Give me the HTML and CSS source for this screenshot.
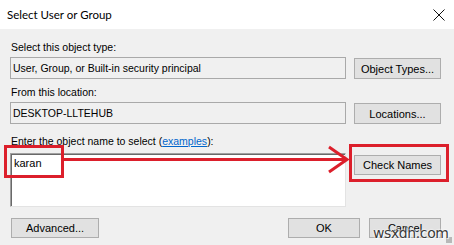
FILE: index.html
```html
<!DOCTYPE html>
<html>
<head>
<meta charset="utf-8">
<link rel="stylesheet" href="styles.css">
</head>
<body>
<div class="dialog">
  <div class="titlebar">
    <span class="title">Select User or Group</span>
    <svg class="close" width="12" height="12" viewBox="0 0 12 12"><path d="M0.5 0.5 L11.5 11.5 M11.5 0.5 L0.5 11.5" stroke="#111" stroke-width="1" fill="none"/></svg>
  </div>
  <div class="content">
    <div class="label l1">Select this object type:</div>
    <div class="row">
      <div class="field">User, Group, or Built-in security principal</div>
      <div class="btn side">Object Types...</div>
    </div>
    <div class="label l2">From this location:</div>
    <div class="row">
      <div class="field">DESKTOP-LLTEHUB</div>
      <div class="btn side">Locations...</div>
    </div>
    <div class="label l3">Enter the object name to select (<span class="link">examples</span>):</div>
    <div class="row">
      <div class="area">karan</div>
      <div class="btn side check">Check Names</div>
    </div>
    <div class="bottom">
      <div class="btn adv">Advanced...</div>
      <div class="spacer"></div>
      <div class="btn ok">OK</div>
      <div class="btn cancel">Cancel</div>
    </div>
  </div>
  <svg class="annot" width="454" height="245" viewBox="0 0 454 245">
    <rect x="5.5" y="146.5" width="57" height="30" fill="none" stroke="#dc1f2b" stroke-width="3"/>
    <rect x="350.5" y="145.5" width="97" height="35" fill="none" stroke="#dc1f2b" stroke-width="3"/>
    <line x1="64" y1="159.5" x2="346" y2="159.5" stroke="#dc1f2b" stroke-width="3"/>
    <polyline points="329,147 347,159.5 329,172" fill="none" stroke="#dc1f2b" stroke-width="3"/>
  </svg>
  <div class="grip"></div>
  <div class="watermark">wsxdn.com</div>
</div>
</body>
</html>
```
FILE: styles.css
```css
html, body {
  margin: 0;
  padding: 0;
}
body {
  width: 454px;
  height: 245px;
  overflow: hidden;
  background: #f0f0f0;
  font-family: "Liberation Sans", Arial, sans-serif;
  font-size: 10.5px;
  color: #000;
}
.dialog {
  position: relative;
  width: 454px;
  height: 245px;
}
.titlebar {
  height: 29px;
  background: #fff;
  display: flex;
  align-items: center;
  justify-content: space-between;
  padding: 0 9px 0 7px;
  box-sizing: border-box;
}
.title {
  font-family: Lato, "Noto Sans", sans-serif;
  font-size: 11.5px;
  color: #000;
  padding-bottom: 1px;
}
.close {
  display: block;
}
.content {
  height: 216px;
  box-sizing: border-box;
  padding: 12px 0 0 10px;
  display: flex;
  flex-direction: column;
}
.label {
  height: 13px;
  line-height: 13px;
  padding-left: 1px;
  white-space: nowrap;
}
.l1 { margin-bottom: 3px; }
.l2 { margin-top: 7px; margin-bottom: 3px; }
.l3 { margin-top: 11px; margin-bottom: 5px; }
.link {
  color: #0066cc;
  text-decoration: underline;
}
.row {
  display: flex;
  gap: 8px;
  align-items: flex-start;
}
.field {
  width: 336px;
  height: 22px;
  box-sizing: border-box;
  border: 1px solid #a9a9a9;
  background: #f0f0f0;
  line-height: 20px;
  padding-left: 2px;
  white-space: nowrap;
}
.area {
  width: 336px;
  height: 54px;
  box-sizing: border-box;
  background: #fff;
  border-top: 1px solid #a0a0a0;
  border-left: 1px solid #a0a0a0;
  border-right: 1px solid #e3e3e3;
  border-bottom: 1px solid #e3e3e3;
  box-shadow: inset 1px 1px 0 #696969;
  padding: 3px 0 0 3px;
  line-height: 13px;
  font-size: 11px;
}
.btn {
  box-sizing: border-box;
  width: 87px;
  height: 21px;
  background: #e1e1e1;
  border: 1px solid #adadad;
  display: flex;
  align-items: center;
  justify-content: center;
  white-space: nowrap;
  font-size: 11px;
}
.side { margin-top: 1px; }
.check { margin-top: 2px; height: 20px; }
.bottom {
  display: flex;
  margin-top: 11px;
  width: 431px;
  height: 20px;
}
.bottom .btn { height: 20px; }
.adv { margin-left: 1px; width: 88px; }
.spacer { flex: 1; }
.ok { width: 72px; margin-right: 9px; }
.cancel { width: 72px; }
.annot {
  position: absolute;
  left: 0;
  top: 0;
  pointer-events: none;
}
.grip {
  position: absolute;
  right: 2px;
  bottom: 2px;
  width: 6px;
  height: 6px;
  background-image: radial-gradient(circle, #b8b8b8 0.8px, transparent 1px);
  background-size: 2px 2px;
}
.watermark {
  position: absolute;
  left: 373px;
  top: 225px;
  font-family: "DejaVu Sans", sans-serif;
  font-size: 14px;
  color: #3a3a3a;
  text-shadow: 0 0 2px #fff, 0 0 2px #fff, 1px 1px 1px #fff;
  letter-spacing: -0.4px;
}
```
